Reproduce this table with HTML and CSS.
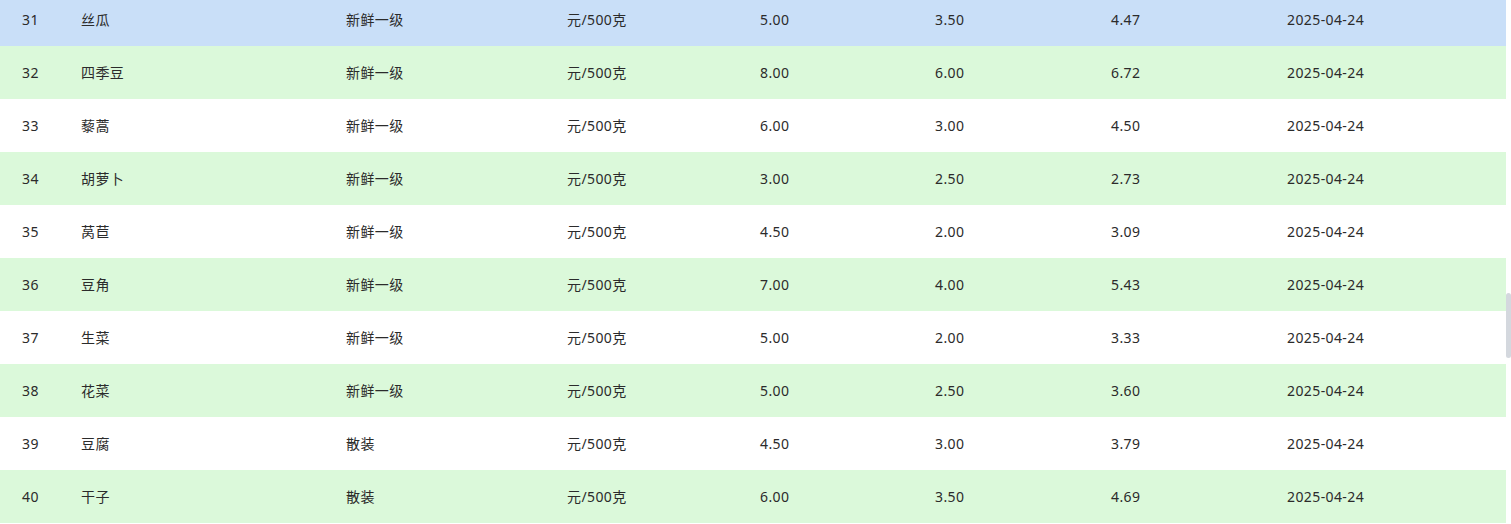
FILE: index.html
```html
<!DOCTYPE html>
<html lang="zh-CN">
<head>
<meta charset="utf-8">
<title>价格表</title>
<link rel="stylesheet" href="styles.css">
</head>
<body>
<div class="page">
  <table class="price-table">
    <colgroup>
      <col class="c-idx"><col class="c-name"><col class="c-spec"><col class="c-unit">
      <col class="c-max"><col class="c-min"><col class="c-avg"><col class="c-date">
    </colgroup>
    <tbody>
      <tr class="row hover"><td>31</td><td>丝瓜</td><td>新鲜一级</td><td>元/500克</td><td>5.00</td><td>3.50</td><td>4.47</td><td>2025-04-24</td></tr>
      <tr class="row stripe"><td>32</td><td>四季豆</td><td>新鲜一级</td><td>元/500克</td><td>8.00</td><td>6.00</td><td>6.72</td><td>2025-04-24</td></tr>
      <tr class="row"><td>33</td><td>藜蒿</td><td>新鲜一级</td><td>元/500克</td><td>6.00</td><td>3.00</td><td>4.50</td><td>2025-04-24</td></tr>
      <tr class="row stripe"><td>34</td><td>胡萝卜</td><td>新鲜一级</td><td>元/500克</td><td>3.00</td><td>2.50</td><td>2.73</td><td>2025-04-24</td></tr>
      <tr class="row"><td>35</td><td>莴苣</td><td>新鲜一级</td><td>元/500克</td><td>4.50</td><td>2.00</td><td>3.09</td><td>2025-04-24</td></tr>
      <tr class="row stripe"><td>36</td><td>豆角</td><td>新鲜一级</td><td>元/500克</td><td>7.00</td><td>4.00</td><td>5.43</td><td>2025-04-24</td></tr>
      <tr class="row"><td>37</td><td>生菜</td><td>新鲜一级</td><td>元/500克</td><td>5.00</td><td>2.00</td><td>3.33</td><td>2025-04-24</td></tr>
      <tr class="row stripe"><td>38</td><td>花菜</td><td>新鲜一级</td><td>元/500克</td><td>5.00</td><td>2.50</td><td>3.60</td><td>2025-04-24</td></tr>
      <tr class="row"><td>39</td><td>豆腐</td><td>散装</td><td>元/500克</td><td>4.50</td><td>3.00</td><td>3.79</td><td>2025-04-24</td></tr>
      <tr class="row stripe"><td>40</td><td>干子</td><td>散装</td><td>元/500克</td><td>6.00</td><td>3.50</td><td>4.69</td><td>2025-04-24</td></tr>
    </tbody>
  </table>
</div>
<div class="scroll-thumb"></div>
</body>
</html>
```
FILE: styles.css
```css
html, body {
  margin: 0;
  padding: 0;
  background: #ffffff;
  overflow: hidden;
}
body {
  font-family: "Noto Sans", "Noto Sans CJK SC", sans-serif;
  font-size: 14px;
  color: #2b2b2b;
}
.page {
  width: 1506px;
  margin-top: -7px;
}
.price-table {
  width: 1506px;
  border-collapse: collapse;
  table-layout: fixed;
}
.c-idx { width: 69px; }
.c-name { width: 265px; }
.c-spec { width: 221px; }
.c-unit { width: 193px; }
.c-max { width: 175px; }
.c-min { width: 176px; }
.c-avg { width: 176px; }
.c-date { width: auto; }
.row td {
  height: 53px;
  padding: 0 0 0 12px;
  vertical-align: middle;
  white-space: nowrap;
  line-height: 20px;
  letter-spacing: 0.4px;
  box-sizing: border-box;
}
.row td:first-child {
  padding-left: 22px;
}
.row.stripe {
  background: #dbf9da;
}
.row.hover {
  background: #c9dff8;
}
.scroll-thumb {
  position: absolute;
  left: 1506px;
  top: 293px;
  width: 5px;
  height: 65px;
  border-radius: 3px;
  background: #d4d8de;
}
```
